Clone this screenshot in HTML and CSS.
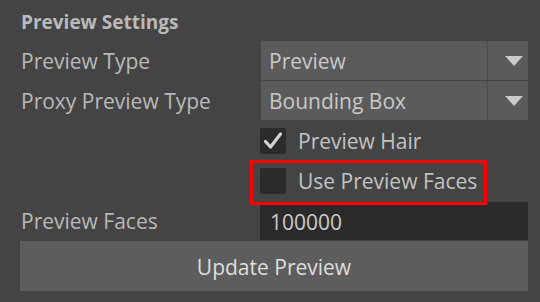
FILE: index.html
```html
<!DOCTYPE html>
<html>
<head>
<meta charset="utf-8">
<link rel="stylesheet" href="styles.css">
</head>
<body>
<div class="panel">
  <div class="title">Preview Settings</div>
  <div class="grid">
    <div class="label">Preview Type</div>
    <div class="dropdown"><span class="dd-text">Preview</span><span class="dd-arrow"><span class="tri"></span></span></div>
    <div class="label">Proxy Preview Type</div>
    <div class="dropdown"><span class="dd-text">Bounding Box</span><span class="dd-arrow"><span class="tri"></span></span></div>
    <div class="label"></div>
    <div class="check-row">
      <span class="box"><svg width="26" height="26" viewBox="0 0 26 26"><path d="M5.5 13.5 L10.5 19 L20.5 6" fill="none" stroke="#d2d2d2" stroke-width="3.2" stroke-linecap="round" stroke-linejoin="round"/></svg></span>
      <span class="check-text">Preview Hair</span>
    </div>
    <div class="label"></div>
    <div class="check-row highlighted">
      <span class="box"></span>
      <span class="check-text">Use Preview Faces</span>
      <span class="redbox"></span>
    </div>
    <div class="label">Preview Faces</div>
    <div class="field">100000</div>
  </div>
  <div class="button">Update Preview</div>
</div>
</body>
</html>
```
FILE: styles.css
```css
html, body {
  margin: 0;
  padding: 0;
  background: #444444;
}
body {
  font-family: "Open Sans", "Noto Sans", sans-serif;
  font-size: 21px;
  color: #b9b9b9;
  width: 540px;
  height: 302px;
  overflow: hidden;
}
.panel {
  padding: 0 12px 0 20px;
}
.title {
  height: 41px;
  line-height: 45px;
  font-size: 19px;
  font-weight: 700;
  padding-left: 1px;
  color: #bababa;
}
.grid {
  display: grid;
  grid-template-columns: 240px 268px;
  grid-auto-rows: 39px;
  row-gap: 1px;
}
.label {
  padding-left: 1px;
  line-height: 40px;
  white-space: nowrap;
}
.dropdown {
  margin-left: 1px;
  display: flex;
  background: #5b5b5b;
  color: #c9c9c9;
}
.dd-text {
  flex: 1;
  padding-left: 8px;
  line-height: 40px;
  border-right: 1px solid #4b4b4b;
}
.dd-arrow {
  width: 35px;
  display: flex;
  align-items: center;
  justify-content: flex-end;
  padding-right: 5px;
}
.tri {
  width: 0;
  height: 0;
  border-left: 9px solid transparent;
  border-right: 9px solid transparent;
  border-top: 10px solid #c9c9c9;
}
.check-row {
  position: relative;
  display: flex;
  align-items: center;
  gap: 12px;
  color: #c3c3c3;
  white-space: nowrap;
}
.box {
  width: 26px;
  height: 26px;
  border-radius: 2px;
  background: #2b2b2b;
  display: block;
  flex: none;
}
.box svg {
  display: block;
}
.check-text {
  line-height: 40px;
}
.redbox {
  position: absolute;
  left: -10px;
  top: -1px;
  width: 231px;
  height: 39px;
  border: 3px solid #ff0000;
}
.field {
  background: #2b2b2b;
  color: #cbcbcb;
  padding-left: 10px;
  line-height: 40px;
  margin-top: 1px;
}
.button {
  margin-top: 1px;
  height: 50px;
  background: #5d5d5d;
  color: #dedede;
  text-align: center;
  line-height: 52px;
}
```
